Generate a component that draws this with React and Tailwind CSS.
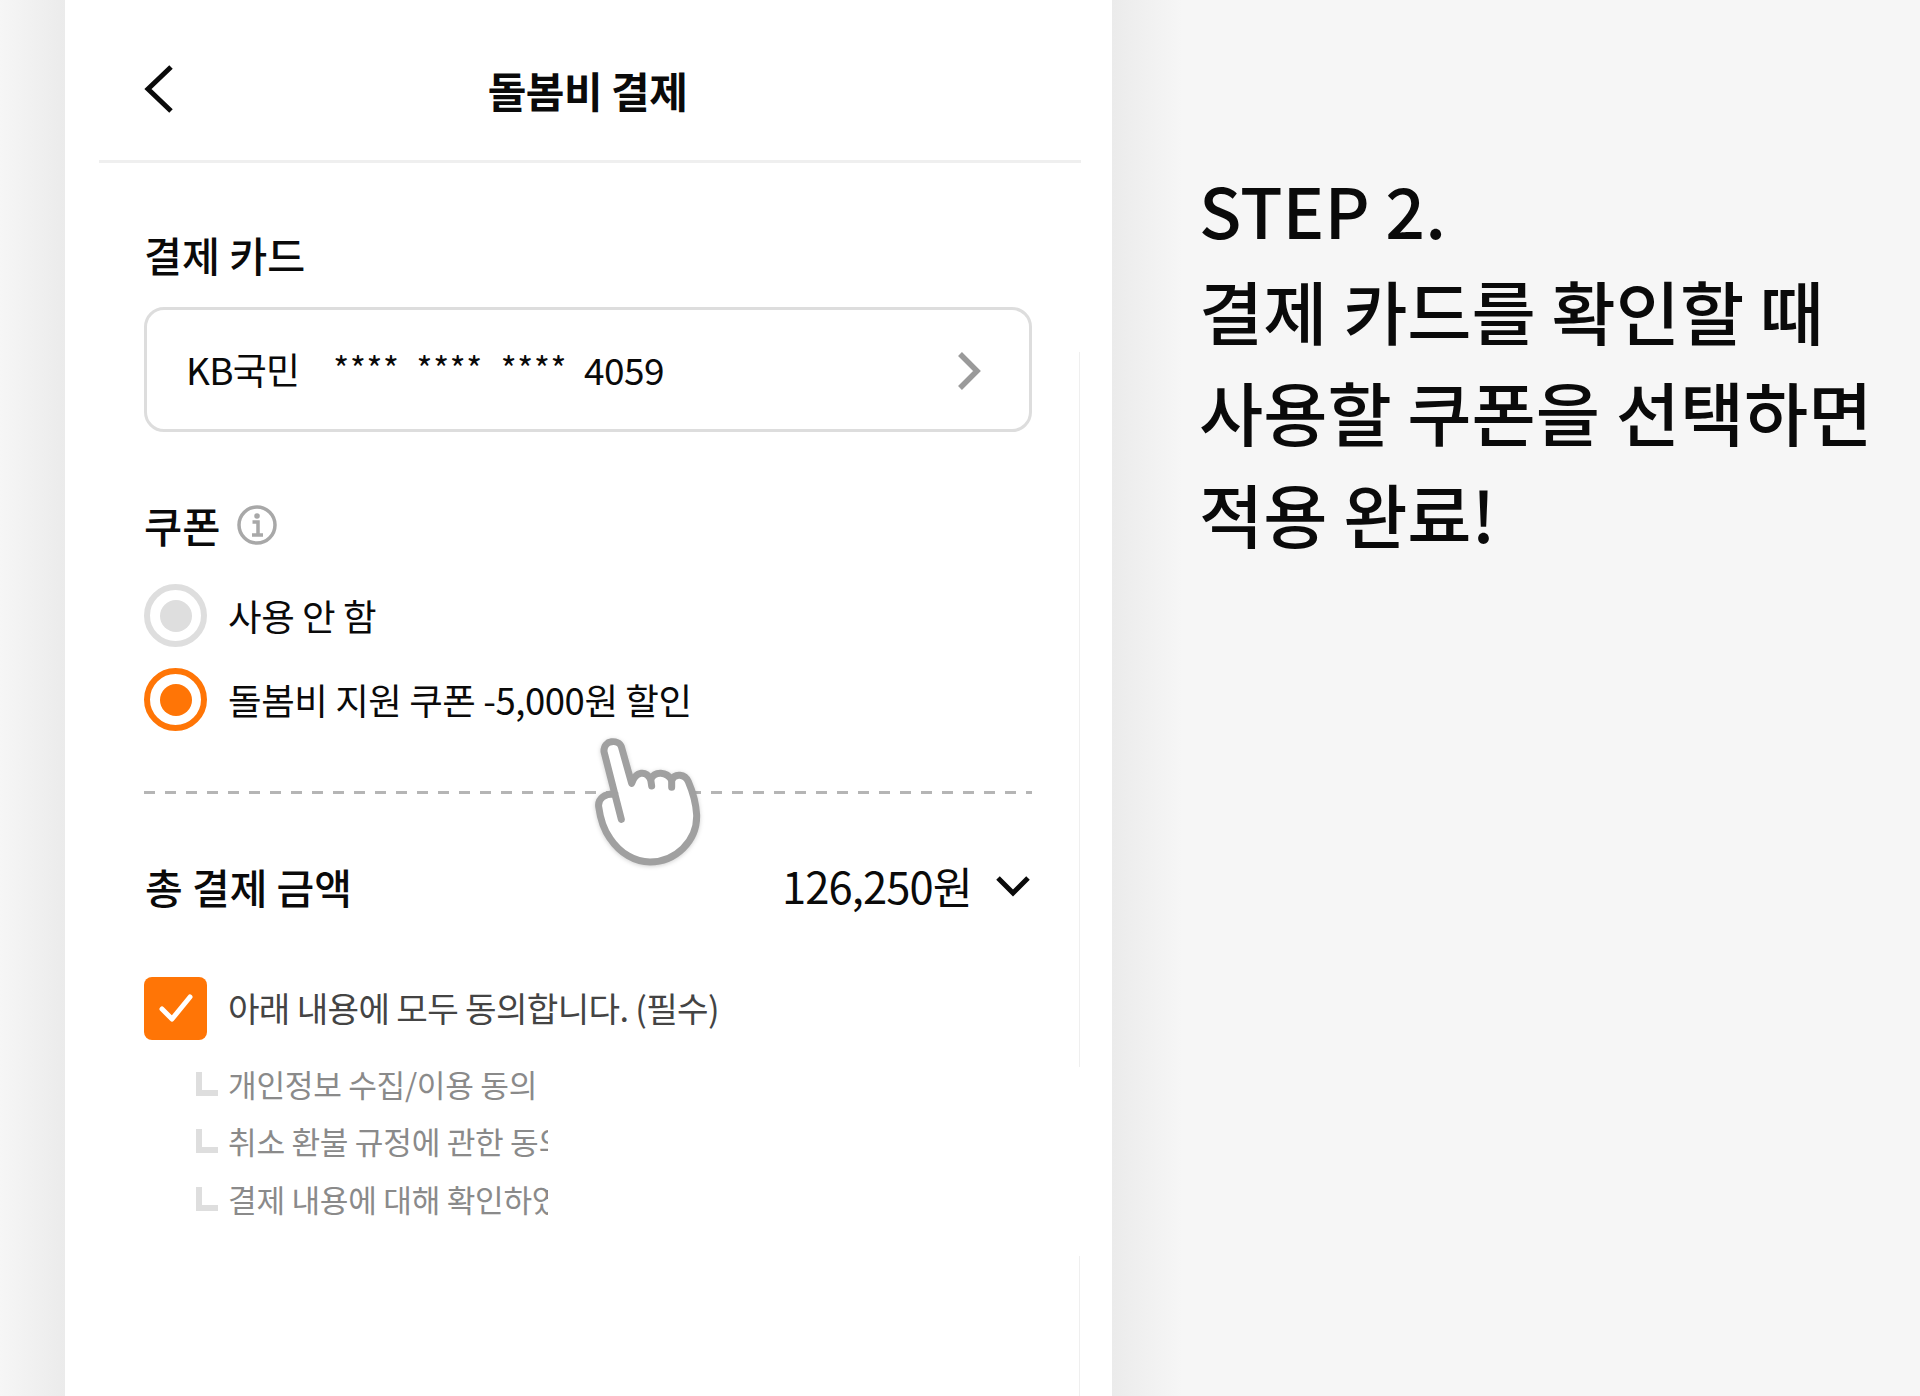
const Hand = () => (
  <svg viewBox="0 0 600 600" className="absolute left-[495px] top-[700px] w-[200px] h-[200px] drop-shadow-[0_1px_2px_rgba(0,0,0,0.18)]" fill="none">
    <path d="M165 282C135 280 113 295 116 320C120 350 128 385 150 415C180 460 225 486 270 486C345 486 412 425 410 345C408 310 398 275 385 245C375 222 345 218 335 240C320 215 285 212 272 238C258 212 228 212 215 250L184 140C176 118 130 118 132 155L184 358" fill="#fff" stroke="#a0a0a0" strokeWidth="21" strokeLinecap="round" strokeLinejoin="round" />
    <path d="M272 238L275 258M335 240L335 262" stroke="#a0a0a0" strokeWidth="21" strokeLinecap="round" />
  </svg>
);

const Radio = ({ on, label }) => (
  <div className="flex items-center h-[63px]">
    <span className={`flex items-center justify-center w-[63px] h-[63px] rounded-full border-[6px] ${on ? "border-[#ff7506]" : "border-[#dedede]"}`}>
      <span className={`w-[32px] h-[32px] rounded-full ${on ? "bg-[#ff7506]" : "bg-[#dedede]"}`} />
    </span>
    <span className="ml-[21px] text-[36.5px] leading-[63px] tracking-[-0.012em] text-[#0a0a0a]">{label}</span>
  </div>
);

const Sub = ({ children }) => (
  <div className="flex items-center h-[57.5px] pl-[52px]">
    <span className="w-[22px] h-[24px] border-l-[6px] border-b-[6px] border-[#dedede]" />
    <span className="ml-[10px] w-[320px] overflow-hidden whitespace-nowrap text-[31.2px] leading-[46px] tracking-[-0.01em] text-[#8a8a8a]">{children}</span>
  </div>
);

export default function App() {
  return (
    <div className="flex w-full h-[1396px] overflow-hidden bg-[#f6f6f6] font-['Noto_Sans_CJK_KR',sans-serif]">
      <div className="w-[65px] shrink-0 bg-gradient-to-r from-[#f6f6f6] to-[#ebebeb]" />
      <main className="relative w-[1047px] shrink-0 bg-white">
        <header className="relative ml-[34px] mr-[31px] h-[163px] border-b-[3px] border-[#efefef] flex items-center justify-center pr-[5px] pt-[20px]">
          <svg viewBox="0 0 30 48" className="absolute left-[45px] top-[65px] w-[30px] h-[48px]" fill="none">
            <path d="M27 2L4 24L27 46" stroke="#0a0a0a" strokeWidth="5" />
          </svg>
          <h1 className="text-[42px] font-bold tracking-[-0.012em] text-[#0a0a0a] leading-[60px]">돌봄비 결제</h1>
        </header>
        <div className="px-[79px] pr-[80px]">
          <h2 className="mt-[61px] text-[41.3px] leading-[60px] font-medium text-[#0a0a0a]">결제 카드</h2>
          <div className="mt-[23px] h-[125px] rounded-[20px] border-[3px] border-[#dddddd] flex items-center pl-[39px] pr-[48px] text-[37px] text-[#0a0a0a]">
            <span className="tracking-[-0.02em] mt-[0px]">KB국민</span>
            <span className="ml-[34px] tracking-[0.02em] mt-[-5px] text-[34px]">****</span>
            <span className="ml-[17px] tracking-[0.02em] mt-[-5px] text-[34px]">****</span>
            <span className="ml-[18px] tracking-[0.02em] mt-[-5px] text-[34px]">****</span>
            <span className="ml-[17px] tracking-[-0.015em] mt-[0px]">4059</span>
            <svg viewBox="0 0 24 38" className="ml-auto mt-[3px] w-[24px] h-[38px]" fill="none">
              <path d="M3 2L20 19L3 36" stroke="#9a9a9a" strokeWidth="5.5" />
            </svg>
          </div>
          <div className="mt-[63px] h-[60px] flex items-center">
            <h2 className="text-[41.5px] leading-[60px] font-medium text-[#0a0a0a]">쿠폰</h2>
            <svg viewBox="0 0 40 40" className="ml-[17px] w-[40px] h-[40px]" fill="none">
              <circle cx="20" cy="20" r="18" stroke="#a8a8a8" strokeWidth="3.5" />
              <circle cx="20" cy="11" r="2.8" fill="#a8a8a8" />
              <path d="M15.5 17H21V29M15 30H26" stroke="#a8a8a8" strokeWidth="3.5" />
            </svg>
          </div>
          <div className="mt-[29px] flex flex-col gap-[21px]">
            <Radio label="사용 안 함" />
            <Radio on label="돌봄비 지원 쿠폰 -5,000원 할인" />
          </div>
          <div className="mt-[60px] h-[3px] bg-[repeating-linear-gradient(to_right,#b5b5b5_0_11px,transparent_11px_21px)]" />
          <div className="mt-[61.5px] h-[60px] flex items-center">
            <h2 className="text-[41px] leading-[60px] font-medium text-[#0a0a0a] ml-[1px]">총 결제 금액</h2>
            <span className="ml-auto text-[43.5px] leading-[60px] tracking-[-0.02em] text-[#0a0a0a]">126,250원</span>
            <svg viewBox="0 0 34 22" className="ml-[24px] mr-[2px] w-[34px] h-[22px]" fill="none">
              <path d="M2 3L17 18L32 3" stroke="#0a0a0a" strokeWidth="5" />
            </svg>
          </div>
          <div className="mt-[61px] flex items-center h-[63px]">
            <span className="flex items-center justify-center w-[63px] h-[63px] rounded-[8px] bg-[#ff7506]">
              <svg viewBox="0 0 34 30" className="w-[34px] h-[30px]" fill="none">
                <path d="M3 16L13 26L31 4" stroke="#fff" strokeWidth="5" strokeLinecap="round" strokeLinejoin="round" />
              </svg>
            </span>
            <span className="ml-[21px] text-[34.3px] leading-[63px] tracking-[-0.02em] text-[#444] mt-[-1px]">아래 내용에 모두 동의합니다. (필수)</span>
          </div>
          <div className="mt-[15.5px]">
            <Sub>개인정보 수집/이용 동의</Sub>
            <Sub>취소 환불 규정에 관한 동의</Sub>
            <Sub>결제 내용에 대해 확인하였습니다</Sub>
          </div>
        </div>
        <span className="absolute left-[1014px] top-[352px] h-[715px] w-[1px] bg-[#efefef]" />
        <span className="absolute left-[1014px] top-[1256px] h-[140px] w-[1px] bg-[#efefef]" />
        <Hand />
      </main>
      <section className="flex-1 pl-[87px] pt-[158px] bg-[linear-gradient(to_right,#ebebeb,#f6f6f6_70px)]">
        <p className="text-[69.8px] leading-[101.2px] font-medium text-[#0a0a0a] whitespace-nowrap">
          STEP 2.<br />결제 카드를 확인할 때<br />사용할 쿠폰을 선택하면<br />적용 완료!
        </p>
      </section>
    </div>
  );
}
